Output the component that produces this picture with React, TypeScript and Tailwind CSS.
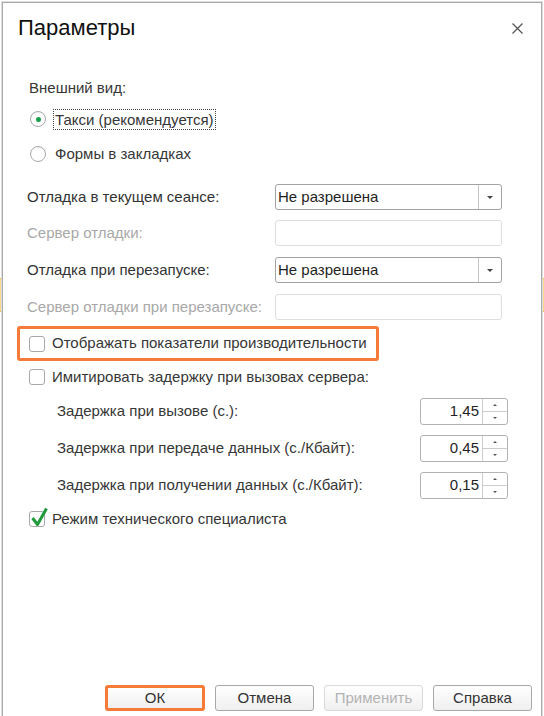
import React from 'react'

type RowProps = { children: React.ReactNode }

function Radio({ checked }: { checked?: boolean }) {
  return (
    <span className="flex h-4 w-4 shrink-0 items-center justify-center rounded-full border border-[#a9a9a9] bg-white shadow-[inset_0_1px_1px_rgba(0,0,0,0.06)]">
      {checked && <span className="h-[5px] w-[5px] rounded-full bg-[#17a04a]" />}
    </span>
  )
}

function Checkbox({ checked }: { checked?: boolean }) {
  return (
    <span className="relative h-4 w-4 shrink-0 rounded-[3px] border border-[#a9a9a9] bg-white">
      {checked && (
        <svg className="absolute -top-[6px] left-0" width="19" height="21" viewBox="0 0 19 21">
          <path d="M2.5 12 L7.5 18.5 L16.5 2.5" stroke="#1f9a3c" strokeWidth="3" fill="none" strokeLinejoin="round" />
        </svg>
      )}
    </span>
  )
}

function DownArrow({ size = 3, color = '#444' }: { size?: number; color?: string }) {
  return (
    <span
      className="h-0 w-0 border-l-transparent border-r-transparent border-solid"
      style={{ borderLeftWidth: size, borderRightWidth: size, borderTopWidth: size, borderTopColor: color }}
    />
  )
}

function UpArrow({ size = 2, color = '#555' }: { size?: number; color?: string }) {
  return (
    <span
      className="h-0 w-0 border-l-transparent border-r-transparent border-solid"
      style={{ borderLeftWidth: size, borderRightWidth: size, borderBottomWidth: size, borderBottomColor: color }}
    />
  )
}

function Select({ value }: { value: string }) {
  return (
    <div className="flex h-[26px] w-[227px] rounded-[3px] border border-[#a3a3a3] bg-white">
      <div className="flex flex-1 items-center pl-[2px] text-[#1f1f1f]">{value}</div>
      <div className="flex w-[23px] items-center justify-center border-l border-[#c6c6c6]">
        <DownArrow />
      </div>
    </div>
  )
}

function DisabledInput() {
  return <div className="h-[26px] w-[227px] rounded-[3px] border border-[#dedede] bg-white" />
}

function Spinner({ value }: { value: string }) {
  return (
    <div className="flex h-[27px] w-[88px] rounded-[3px] border border-[#b3b3b3] bg-white">
      <div className="flex flex-1 items-center justify-end pr-[3px] text-[#1f1f1f]">{value}</div>
      <div className="flex w-[25px] flex-col border-l border-[#cccccc]">
        <div className="flex flex-1 items-center justify-center border-b border-[#cccccc]">
          <UpArrow />
        </div>
        <div className="flex flex-1 items-center justify-center">
          <DownArrow size={2} color="#555" />
        </div>
      </div>
    </div>
  )
}

function FieldRow({ label, disabled, children }: { label: string; disabled?: boolean } & RowProps) {
  return (
    <div className="flex items-center">
      <div className={`w-[248px] ${disabled ? 'text-[#a8a8a8]' : 'text-[#333]'}`}>{label}</div>
      {children}
    </div>
  )
}

function DelayRow({ label, value }: { label: string; value: string }) {
  return (
    <div className="mt-[10px] flex w-[481px] items-center justify-between pl-[30px]">
      <span>{label}</span>
      <Spinner value={value} />
    </div>
  )
}

function Button({ children, primary, disabled }: { primary?: boolean; disabled?: boolean } & RowProps) {
  let cls = 'border border-[#a8a8a8] text-[#333]'
  if (primary) cls = 'border-[3px] border-[#f47b38] text-[#333]'
  if (disabled) cls = 'border border-[#dadada] text-[#b3b3b3]'
  return (
    <div
      className={`flex h-[26px] items-center justify-center rounded-[3px] bg-linear-to-b from-white to-[#efefef] ${cls} ${
        primary ? 'w-[100px]' : 'w-[99px]'
      }`}
    >
      {children}
    </div>
  )
}

export default function App() {
  return (
    <div className="relative h-[716px] w-[544px] overflow-hidden bg-white font-['Liberation_Sans',Arial,sans-serif] text-[15px] text-[#363636]">
      {/* window behind the dialog */}
      <div className="mt-[278px] h-[34px] border-y border-[#e8bd4e] bg-[#f6d98c]" />

      <div className="absolute left-[2px] top-[2px] flex h-[740px] w-[540px] flex-col border border-[#a9a9a9] bg-white shadow-[0_0_0_1px_#dedede]">
        {/* header */}
        <div className="flex items-center justify-between pl-[15px] pr-[18px] pt-[11px]">
          <div className="h-[28px] text-[22px] leading-[28px] text-[#111]">Параметры</div>
          <svg width="11" height="11" viewBox="0 0 11 11">
            <path d="M0.5 0.5 L10.5 10.5 M10.5 0.5 L0.5 10.5" stroke="#555" strokeWidth="1.3" />
          </svg>
        </div>

        <div className="flex flex-col pl-[24px]">
          <div className="mt-[36px] ml-[2px] flex h-[20px] items-center">Внешний вид:</div>

          <div className="mt-[10px] ml-[3px] flex h-[22px] items-center gap-[7px]">
            <Radio checked />
            <span className="border border-dotted border-[#444] pl-[1px] pr-[1px] leading-[19px]">Такси (рекомендуется)</span>
          </div>
          <div className="mt-[13px] ml-[3px] flex h-[22px] items-center gap-[9px]">
            <Radio />
            <span>Формы в закладках</span>
          </div>

          <div className="mt-[19px]">
            <FieldRow label="Отладка в текущем сеансе:">
              <Select value="Не разрешена" />
            </FieldRow>
          </div>
          <div className="mt-[10px]">
            <FieldRow label="Сервер отладки:" disabled>
              <DisabledInput />
            </FieldRow>
          </div>
          <div className="mt-[11px]">
            <FieldRow label="Отладка при перезапуске:">
              <Select value="Не разрешена" />
            </FieldRow>
          </div>
          <div className="mt-[11px]">
            <FieldRow label="Сервер отладки при перезапуске:" disabled>
              <DisabledInput />
            </FieldRow>
          </div>

          <div className="mt-[6px] -ml-[10px] flex h-[35px] w-[362px] items-center gap-[7px] rounded-[3px] border-[3px] border-[#f47b38] pl-[9px]">
            <Checkbox />
            <span>Отображать показатели производительности</span>
          </div>

          <div className="mt-[5px] ml-[2px] flex h-[22px] items-center gap-[7px]">
            <Checkbox />
            <span>Имитировать задержку при вызовах сервера:</span>
          </div>

          <DelayRow label="Задержка при вызове (с.):" value="1,45" />
          <DelayRow label="Задержка при передаче данных (с./Кбайт):" value="0,45" />
          <DelayRow label="Задержка при получении данных (с./Кбайт):" value="0,15" />

          <div className="mt-[9px] ml-[2px] flex h-[22px] items-center gap-[7px]">
            <Checkbox checked />
            <span>Режим технического специалиста</span>
          </div>
        </div>

        {/* footer buttons */}
        <div className="mt-[155px] flex justify-end gap-[10px] pr-[9px]">
          <Button primary>ОК</Button>
          <Button>Отмена</Button>
          <Button disabled>Применить</Button>
          <Button>Справка</Button>
        </div>
      </div>
    </div>
  )
}
